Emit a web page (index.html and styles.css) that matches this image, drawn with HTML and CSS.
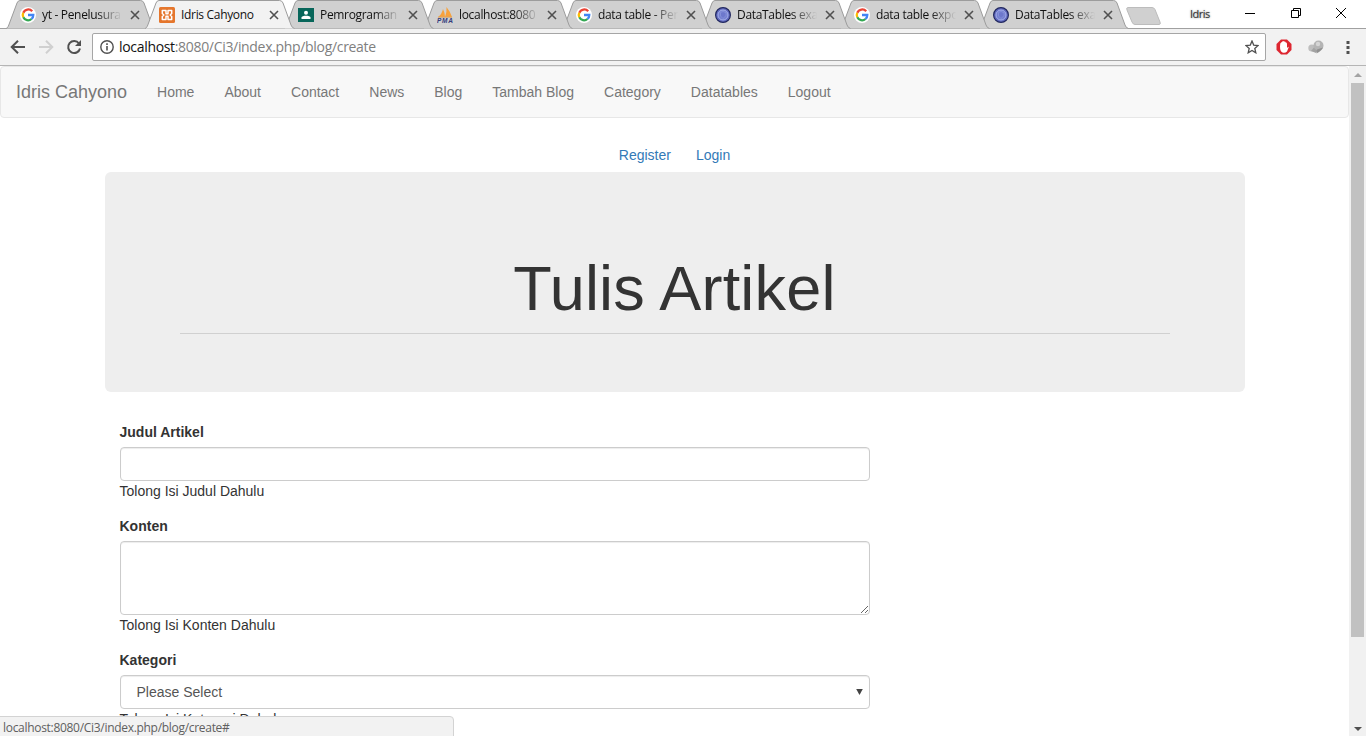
FILE: index.html
```html
<!DOCTYPE html>
<html lang="id">
<head>
<meta charset="utf-8">
<title>Idris Cahyono</title>
<link rel="stylesheet" href="styles.css">
</head>
<body>
<svg class="defs" width="0" height="0">
  <symbol id="shape" viewBox="0 0 150 29"><path d="M0 28.500C1.500 28 2 27 2.800 25L11 3Q12 .5 14 .5H134.500Q137 .5 138 3L146 25Q147 28 149.500 28.500" /></symbol>
  <symbol id="google" viewBox="0 0 16 16"><circle cx="8" cy="8" r="8" fill="#fff"/><g fill="none" stroke-width="2.300"><path d="M12.200 4.300A5.300 5.300 0 0 0 3.300 5.700" stroke="#ea4335"/><path d="M3.300 5.700A5.300 5.300 0 0 0 3.300 10.300" stroke="#fbbc05"/><path d="M3.300 10.300A5.300 5.300 0 0 0 11.500 12" stroke="#34a853"/><path d="M11.500 12A5.200 5.200 0 0 0 13.300 8H8" stroke="#4285f4"/></g></symbol>
  <symbol id="datatables" viewBox="0 0 16 16"><circle cx="8" cy="8" r="7.400" fill="#626bc0" stroke="#22285f" stroke-width="1.200"/><circle cx="8" cy="8" r="5" fill="#7480d0" stroke="#a5afe9"/><path d="M5.500 5.500L8 4.500l3 1.200v3L8 11.500 5.500 9z" fill="#6d78cc" stroke="#929ce0" stroke-width=".6"/></symbol>
  <symbol id="x" viewBox="0 0 10 10"><path d="M1 1L9 9M9 1L1 9" stroke="#505050" stroke-width="1.600"/></symbol>
</svg>
<header class="chrome">
  <div class="titlebar">
    <div class="tabs">
      <div class="tab"><svg class="shape"><use href="#shape"/></svg><svg class="fav"><use href="#google"/></svg><span class="label fade">yt - Penelusura</span><svg class="close"><use href="#x"/></svg></div>
      <div class="tab active"><svg class="shape"><use href="#shape"/></svg><svg class="fav" viewBox="0 0 16 16"><rect width="16" height="16" rx="1.500" fill="#e5762c"/><path d="M7 5.200V3.500H3.300V6.500L4.800 8L3.300 9.500V12.500H7V9.200H9V12.500H12.700V9.500L11.200 8L12.700 6.500V3.500H9V6.800H7z" fill="none" stroke="#fff" stroke-width="1.500" stroke-linejoin="round"/></svg><span class="label">Idris Cahyono</span><svg class="close"><use href="#x"/></svg></div>
      <div class="tab"><svg class="shape"><use href="#shape"/></svg><svg class="fav" viewBox="0 0 16 16"><path d="M0 1h16v14H0z" fill="#08665a"/><circle cx="8" cy="5.700" r="2" fill="#fff"/><path d="M3.500 12V10.500C3.500 8 12.500 8 12.500 10.500V12z" fill="#fff"/></svg><span class="label fade">Pemrograman</span><svg class="close"><use href="#x"/></svg></div>
      <div class="tab"><svg class="shape"><use href="#shape"/></svg><svg class="fav" viewBox="0 0 16 16"><path d="M1 10Q5 7 6 2q2 4 2 8zM8 10Q10 5 9.500 0q4 5 5.500 10z" fill="#f7a13b"/><path d="M1 10.200h14" stroke="#d6a66b"/><text x="0" y="15.800" class="pma" textLength="16">PMA</text></svg><span class="label fade">localhost:8080</span><svg class="close"><use href="#x"/></svg></div>
      <div class="tab"><svg class="shape"><use href="#shape"/></svg><svg class="fav"><use href="#google"/></svg><span class="label fade">data table - Pen</span><svg class="close"><use href="#x"/></svg></div>
      <div class="tab"><svg class="shape"><use href="#shape"/></svg><svg class="fav"><use href="#datatables"/></svg><span class="label fade">DataTables exa</span><svg class="close"><use href="#x"/></svg></div>
      <div class="tab"><svg class="shape"><use href="#shape"/></svg><svg class="fav"><use href="#google"/></svg><span class="label fade">data table expo</span><svg class="close"><use href="#x"/></svg></div>
      <div class="tab"><svg class="shape"><use href="#shape"/></svg><svg class="fav"><use href="#datatables"/></svg><span class="label fade">DataTables exa</span><svg class="close"><use href="#x"/></svg></div>
    </div>
    <svg class="newtab" viewBox="0 0 36 18"><path d="M2 .5H26Q28 .5 29 2.500L34 15Q35 17.500 33 17.500H9Q7 17.500 6 15L1 3Q0 .5 2 .5z" fill="#d0d0d0" stroke="#bcbcbc"/></svg>
    <span class="user">Idris</span>
    <div class="window">
      <svg width="12" height="12" viewBox="0 0 12 12"><path d="M1 6.500h10"/></svg>
      <svg width="12" height="12" viewBox="0 0 12 12"><path d="M1.500 3.500h7v7h-7zM3.500 3V1.500h7v7H9"/></svg>
      <svg width="12" height="12" viewBox="0 0 12 12"><path d="M1 1l10 10M11 1L1 11"/></svg>
    </div>
  </div>
  <div class="toolbar">
    <svg class="tool" viewBox="0 0 16 16"><path d="M15 8H2M8 1.700L1.700 8L8 14.300" stroke="#505050"/></svg>
    <svg class="tool" viewBox="0 0 16 16"><path d="M1 8h13M8 1.700L14.300 8L8 14.300" stroke="#d0d0d0"/></svg>
    <svg class="tool" viewBox="0 0 16 16"><path d="M13 4.500A6 6 0 1 0 14 9.500" stroke="#505050"/><path d="M15 1v6H9z" fill="#505050"/></svg>
    <div class="omnibox">
      <svg class="info" viewBox="0 0 14 14"><circle cx="7" cy="7" r="6.200" fill="none" stroke="#505050" stroke-width="1.400"/><path d="M7 6v4.600M7 3.300v1.600" stroke="#505050" stroke-width="1.600"/></svg>
      <span class="url"><b>localhost</b>:8080/Ci3/index.php/blog/create</span>
      <svg class="star" viewBox="0 0 14 14"><path d="M7 1l1.700 4.100 4.400.4-3.300 2.900 1 4.400L7 10.500l-3.800 2.300 1-4.400L.900 5.500l4.400-.4z" fill="none" stroke="#505050" stroke-width="1.300"/></svg>
    </div>
    <svg class="ext" viewBox="0 0 16 16"><path d="M5 .5h6L15.500 5v6L11 15.500H5L.5 11V5z" fill="#dd2630"/><path d="M4.300 4.500Q5.100 3 6 3Q7 1.500 8 2.500Q9.500 2 9.700 3.500Q11 3 11 5v4l1-1q1-.5.500.7L11 12.500Q9 14.500 6.500 13.500Q4 12.500 4 7.500z" fill="#fff"/></svg>
    <svg class="ext gray" viewBox="0 0 16 16"><circle cx="3.800" cy="9" r="3.500" fill="#bebebe"/><path d="M3 12l5-6 3 4-3 4z" fill="#a2a2a2"/><circle cx="10.500" cy="6.500" r="5" fill="#b4b4b4"/><path d="M8.500 14.500l.5-4 6-2q-1 3-6.500 6z" fill="#919191"/><circle cx="10" cy="5" r="2.200" fill="#d5d5d5"/></svg>
    <svg class="menu" viewBox="0 0 4 14"><path d="M.5 1h3v3h-3zM.5 6h3v3h-3zM.5 11h3v3h-3z" fill="#505050"/></svg>
  </div>
</header>
<div class="viewport">
  <main class="page">
    <nav class="navbar">
      <a class="brand">Idris Cahyono</a>
      <a>Home</a><a>About</a><a>Contact</a><a>News</a><a>Blog</a><a>Tambah Blog</a><a>Category</a><a>Datatables</a><a>Logout</a>
    </nav>
    <div class="container">
      <div class="account"><a>Register</a><a>Login</a></div>
      <section class="jumbotron"><h1>Tulis Artikel</h1><hr></section>
      <form class="form">
        <label>Judul Artikel</label>
        <input class="control" type="text">
        <p>Tolong Isi Judul Dahulu</p>
        <label>Konten</label>
        <textarea class="control area"></textarea>
        <p>Tolong Isi Konten Dahulu</p>
        <label>Kategori</label>
        <div class="control select"><span>Please Select</span><svg width="7" height="6" viewBox="0 0 7 6"><path d="M.2 0h6.600L3.500 6z" fill="#444"/></svg></div>
        <p class="kategori">Tolong Isi Kategori Dahulu</p>
      </form>
    </div>
  </main>
  <aside class="scrollbar">
    <svg width="8" height="4" viewBox="0 0 8 4"><path d="M0 4L4 0l4 4z" fill="#a3a3a3"/></svg>
    <div class="thumb"></div>
    <svg width="8" height="4" viewBox="0 0 8 4"><path d="M0 0l4 4 4-4z" fill="#505050"/></svg>
  </aside>
  <div class="status">localhost:8080/Ci3/index.php/blog/create#</div>
</div>
</body>
</html>
```
FILE: styles.css
```css
* { box-sizing: border-box; }
body {
  margin: 0;
  height: 736px;
  overflow: hidden;
  display: flex;
  flex-direction: column;
  background: #fff;
  color: #333;
  font: 14px/20px "Liberation Sans", Arial, sans-serif;
}
svg { display: block; flex: none; }
.defs { position: absolute; }
.chrome { flex: none; font-family: "Open Sans", "Noto Sans", sans-serif; }

/* Tab strip */
.titlebar { display: flex; height: 29px; border-bottom: 1px solid #a0a0a0; padding-left: 6px; }
.tabs { display: flex; height: 29px; }
.tab {
  position: relative;
  display: flex;
  align-items: center;
  width: 150px;
  height: 29px;
  padding: 1px 15px 0 14px;
  margin-right: -11px;
}
.tab:nth-child(1) { z-index: 8; }
.tab:nth-child(3) { z-index: 6; }
.tab:nth-child(4) { z-index: 5; }
.tab:nth-child(5) { z-index: 4; }
.tab:nth-child(6) { z-index: 3; }
.tab:nth-child(7) { z-index: 2; }
.tab:nth-child(8) { z-index: 1; }
.tab.active { z-index: 9; }
.shape { position: absolute; left: 0; top: 0; width: 150px; height: 29px; fill: #d0d0d0; stroke: #9c9c9c; }
.active .shape { fill: #f2f2f2; }
.fav { position: relative; width: 16px; height: 16px; }
.label {
  position: relative;
  width: 82px;
  margin-left: 6px;
  white-space: nowrap;
  color: #111;
  font-size: 12px;
  line-height: 18px;
  letter-spacing: -.32px;
}
.label.fade { width: 80px; margin-right: 2px; -webkit-mask-image: linear-gradient(90deg, #000 68%, transparent); mask-image: linear-gradient(90deg, #000 68%, transparent); }
.close { position: relative; width: 10px; height: 10px; margin-left: 6px; }
.pma { font: italic bold 6.500px "Liberation Sans", sans-serif; fill: #343b7c; }
.newtab { width: 36px; height: 18px; margin: 7px 0 0 8px; }
.user { margin: 5px 0 0 28px; width: 22px; font-size: 11px; line-height: 18px; letter-spacing: -.5px; color: #333; text-shadow: 0 0 2px #777; }
.window { display: flex; gap: 33.5px; margin: 7px 0 0 32px; }
.window svg { fill: none; stroke: #000; }

/* Toolbar */
.toolbar { display: flex; align-items: center; height: 37px; padding: 0 10px; background: #f2f2f2; border-bottom: 1px solid #b5b5b5; }
.tool { width: 16px; height: 16px; margin-right: 12px; fill: none; stroke-width: 2; }
.omnibox { display: flex; align-items: center; width: 1174px; height: 28px; margin-left: -2px; padding: 0 7px; background: #fff; border: 1px solid #a6a6a6; border-radius: 2px; }
.info { width: 14px; height: 14px; }
.url { flex: 1; margin-left: 5px; font-size: 14px; letter-spacing: -.32px; color: #808080; }
.url b { font-weight: 400; color: #111; }
.star { width: 14px; height: 14px; margin-right: -1px; }
.ext { width: 16px; height: 16px; margin-left: 10px; }
.ext.gray { margin-left: 16px; }
.menu { width: 4px; height: 14px; margin-left: 22px; }

/* Web page */
.viewport { position: relative; display: flex; height: 670px; overflow: hidden; }
.page { width: 1349px; height: 670px; overflow: hidden; }
.navbar { display: flex; height: 52px; background: #f8f8f8; border: 1px solid #e7e7e7; border-radius: 4px; color: #777; }
.navbar a { padding: 15px; }
.navbar .brand { font-size: 18px; }
.container { width: 1140px; margin: 0 auto; }
.account { display: flex; justify-content: center; gap: 25px; padding: 27px 0 7px; color: #337ab7; }
.jumbotron { height: 220px; padding: 82px 75px 0; margin-bottom: 30px; background: #eee; border-radius: 6px; text-align: center; }
.jumbotron h1 { margin: 0; font-size: 63px; line-height: 69px; font-weight: 500; letter-spacing: .2px; }
.jumbotron hr { margin: 10px 0 0; border: 0; border-top: 1px solid #d0d0d0; }
.form { display: flex; flex-direction: column; width: 765px; padding-left: 15px; }
.form label { font-weight: 700; margin-bottom: 5px; }
.form p { margin: 0 0 15px; }
.form .kategori { letter-spacing: .05px; }
.control { width: 750px; height: 34px; padding: 6px 12px; border: 1px solid #ccc; border-radius: 4px; background: #fff; box-shadow: inset 0 1px 1px rgba(0,0,0,.075); color: #555; font: inherit; }
.area { height: 74px; resize: both; }
.select { display: flex; align-items: center; justify-content: space-between; padding: 0 6px 0 16px; }

/* Scrollbar and status bubble */
.scrollbar { display: flex; flex-direction: column; align-items: center; width: 17px; padding: 7px 0 5px; background: #f1f1f1; }
.thumb { width: 13px; height: 554px; margin: 6px 0 auto; background: #c1c1c1; }
.status { position: absolute; left: -1px; bottom: -1px; width: 455px; height: 21px; padding: 1px 3px; background: #f2f2f2; border: 1px solid #d3d3d3; border-top-right-radius: 4px; color: #606060; font: 12px/20px "Open Sans", "Noto Sans", sans-serif; letter-spacing: -.3px; }
```
